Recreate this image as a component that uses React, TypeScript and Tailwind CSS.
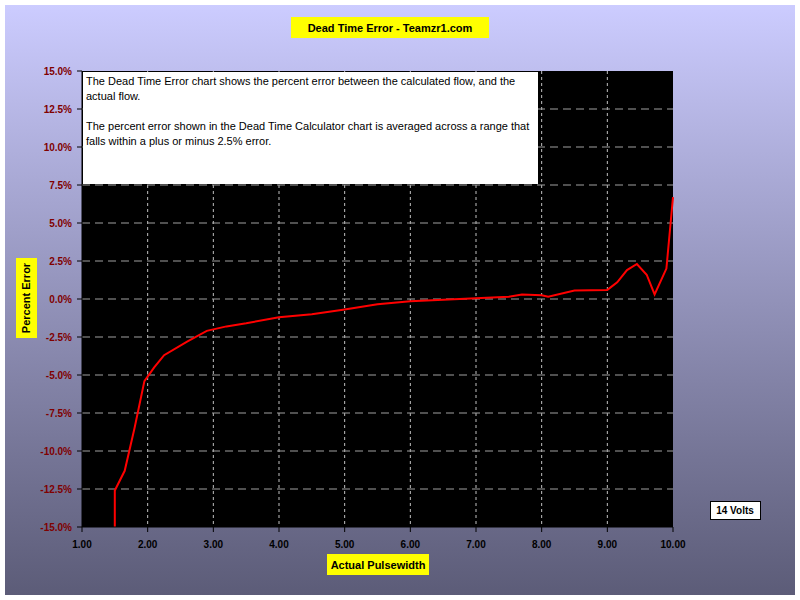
const pts: [number, number][] = [
  [1.5, -15], [1.5, -12.6], [1.65, -11.3], [1.8, -8.5], [1.95, -5.4], [2.1, -4.5], [2.25, -3.7],
  [2.6, -2.8], [2.9, -2.1], [3.2, -1.8], [3.5, -1.6], [4.0, -1.2], [4.5, -1.0], [5.0, -0.7],
  [5.5, -0.35], [6.0, -0.15], [6.5, -0.05], [7.0, 0.05], [7.5, 0.15], [7.7, 0.3], [8.0, 0.25],
  [8.1, 0.15], [8.5, 0.55], [9.0, 0.6], [9.15, 1.1], [9.3, 1.9], [9.45, 2.3], [9.6, 1.6],
  [9.72, 0.3], [9.9, 2.0], [10, 6.7],
];

const X = (v: number) => 82 + (v - 1) * (591 / 9);
const Y = (p: number) => 71 + (15 - p) * 15.2;

const yTicks = Array.from({ length: 13 }, (_, i) => 15 - i * 2.5);
const xTicks = Array.from({ length: 10 }, (_, i) => i + 1);

export default function App() {
  const line = pts.map(([x, y]) => `${X(x).toFixed(1)},${Y(y).toFixed(1)}`).join(' ');
  return (
    <div className="w-[800px] h-[600px] bg-white p-[5px]">
      <div className="w-[790px] h-[590px] bg-gradient-to-b from-[#ccccff] to-[#5c5c78]">
        <svg width="790" height="590" viewBox="5 5 790 590" style={{ fontFamily: '"Liberation Sans", Arial, sans-serif' }}>
          <rect x="291" y="17" width="198" height="21" fill="#ffff00" />
          <text x="390" y="32" textAnchor="middle" fontSize="11" fontWeight="bold">Dead Time Error - Teamzr1.com</text>

          <rect x="82" y="71" width="591" height="456" fill="#000" />
          {xTicks.slice(1, -1).map((v) => (
            <line key={v} x1={X(v)} x2={X(v)} y1="71" y2="527" stroke="#c0c0c0" strokeDasharray="3 3" />
          ))}
          {yTicks.slice(1, -1).map((p) => (
            <line key={p} x1="82" x2="673" y1={Y(p)} y2={Y(p)} stroke="#a0a0a0" strokeDasharray="8 5" />
          ))}
          <rect x="83" y="72" width="455" height="112" fill="#fff" />
          <text fontSize="11" fill="#000">
            <tspan x="86" y="85">The Dead Time Error chart shows the percent error between the calculated flow, and the</tspan>
            <tspan x="86" y="100">actual flow.</tspan>
            <tspan x="86" y="130">The percent error shown in the Dead Time Calculator chart is averaged across a range that</tspan>
            <tspan x="86" y="145">falls within a plus or minus 2.5% error.</tspan>
          </text>
          <polyline points={line} fill="none" stroke="#ff0000" strokeWidth="2" />

          <line x1="82" x2="82" y1="71" y2="527" stroke="#000" />
          <line x1="82" x2="673" y1="527" y2="527" stroke="#000" />
          {yTicks.map((p) => (
            <g key={p}>
              <line x1="77" x2="82" y1={Y(p)} y2={Y(p)} stroke="#000" />
              <text x="72" y={Y(p) + 4} textAnchor="end" fontSize="10" fontWeight="bold" fill="#800000">
                {p.toFixed(1)}%
              </text>
            </g>
          ))}
          {xTicks.map((v) => (
            <g key={v}>
              <line x1={X(v)} x2={X(v)} y1="527" y2="532" stroke="#000" />
              <text x={X(v)} y="548" textAnchor="middle" fontSize="10" fontWeight="bold" fill="#000">
                {v.toFixed(2)}
              </text>
            </g>
          ))}

          <rect x="16" y="258" width="21" height="80" fill="#ffff00" />
          <text x="30" y="298" transform="rotate(-90 30 298)" textAnchor="middle" fontSize="11" fontWeight="bold">Percent Error</text>

          <rect x="327" y="554" width="102" height="21" fill="#ffff00" />
          <text x="378" y="569" textAnchor="middle" fontSize="11" fontWeight="bold">Actual Pulsewidth</text>

          <rect x="710.5" y="501.5" width="50" height="18" fill="#fff" stroke="#000" />
          <text x="735" y="514" textAnchor="middle" fontSize="10" fontWeight="bold">14 Volts</text>
        </svg>
      </div>
    </div>
  );
}
